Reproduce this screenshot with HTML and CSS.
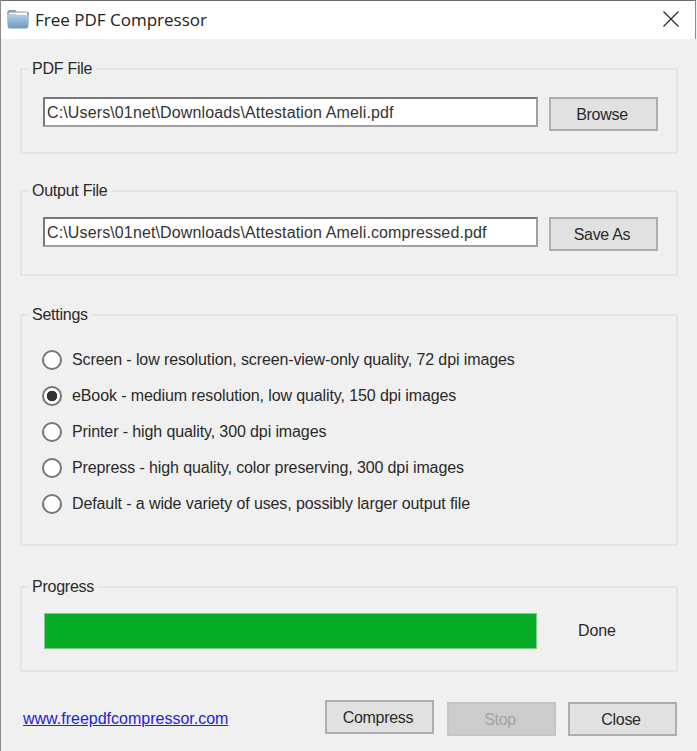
FILE: index.html
```html
<!DOCTYPE html>
<html lang="en">

<head>
    <meta charset="UTF-8">
    <title>Free PDF Compressor</title>
    <link rel="stylesheet" href="styles.css">
</head>

<body>
    <div class="window">
        <div class="titlebar">
            <svg class="app-icon" width="24" height="22" viewBox="0 0 24 22">
                <defs>
                    <linearGradient id="folder" x1="0" y1="0" x2="0" y2="1">
                        <stop offset="0" stop-color="#b4d0e6"/>
                        <stop offset="1" stop-color="#6d98bd"/>
                    </linearGradient>
                </defs>
                <path d="M1 6 Q1 2 4 2 H9 L11 3.5 H20 Q23 3.5 23 6 V10 H1 Z" fill="#8f9ca6"/>
                <rect x="3" y="4.5" width="18" height="4.5" fill="#f4f6f7"/>
                <path d="M1 7 Q1 6 2 6 H9 L11 7 H22 Q23 7 23 8 L22.4 18 Q22.3 20.5 20 20.5 H4 Q1.7 20.5 1.6 18 Z" fill="url(#folder)"/>
            </svg>
            <span class="title">Free PDF Compressor</span>
            <svg class="close-icon" width="16" height="16" viewBox="0 0 16 16">
                <path d="M0.5 0.5 L15.5 15.5 M15.5 0.5 L0.5 15.5" stroke="#222" stroke-width="1.1" fill="none"/>
            </svg>
        </div>

        <div class="content">
            <div class="group group-pdf">
                <div class="group-title">PDF File</div>
                <div class="file-row">
                    <input class="path" type="text" value="C:\Users\01net\Downloads\Attestation Ameli.pdf">
                    <button class="btn">Browse</button>
                </div>
            </div>

            <div class="group group-output">
                <div class="group-title">Output File</div>
                <div class="file-row">
                    <input class="path" type="text" value="C:\Users\01net\Downloads\Attestation Ameli.compressed.pdf">
                    <button class="btn">Save As</button>
                </div>
            </div>

            <div class="group group-settings">
                <div class="group-title">Settings</div>
                <ul class="options">
                    <li><label><input type="radio" name="q"><span>Screen - low resolution, screen-view-only quality, 72 dpi images</span></label></li>
                    <li><label><input type="radio" name="q" checked><span>eBook - medium resolution, low quality, 150 dpi images</span></label></li>
                    <li><label><input type="radio" name="q"><span>Printer - high quality, 300 dpi images</span></label></li>
                    <li><label><input type="radio" name="q"><span>Prepress - high quality, color preserving, 300 dpi images</span></label></li>
                    <li><label><input type="radio" name="q"><span>Default - a wide variety of uses, possibly larger output file</span></label></li>
                </ul>
            </div>

            <div class="group group-progress">
                <div class="group-title">Progress</div>
                <div class="progress-row">
                    <div class="progress-bar"></div>
                    <span class="status">Done</span>
                </div>
            </div>

            <div class="footer">
                <a class="site-link" href="#">www.freepdfcompressor.com</a>
                <div class="actions">
                    <button class="btn btn-compress">Compress</button>
                    <button class="btn" disabled>Stop</button>
                    <button class="btn">Close</button>
                </div>
            </div>
        </div>
    </div>
</body>

</html>
```

FILE: styles.css
```css
* {
    margin: 0;
    padding: 0;
    box-sizing: border-box;
}

li {
    list-style: none;
}

body {
    background-color: #f0f0f0;
    font-family: "Liberation Sans", Arial, sans-serif;
    font-size: 16px;
    letter-spacing: -0.11px;
    color: #2a2a2a;
}

.window {
    width: 697px;
    height: 751px;
    overflow: hidden;
    border-left: 1px solid #8a8a8a;
}

.titlebar {
    height: 39px;
    background-color: #fff;
    border-top: 1px solid #6e6e6e;
    border-right: 1px solid #8a8a8a;
    margin-right: 1px;
    display: flex;
    align-items: center;
    padding: 0 16px 2px 5px;
}

.app-icon {
    margin-right: 5px;
}

.title {
    font-family: "Open Sans", sans-serif;
    font-size: 17px;
    letter-spacing: 0;
    color: #222;
    flex: 1;
}

.content {
    padding: 29px 19px 0;
}

.group {
    border: 2px solid #e5e5e5;
    padding: 0 18px 0 21px;
}

.group-title {
    width: fit-content;
    background-color: #f0f0f0;
    margin: -11px 0 0 -14px;
    padding: 0 4px 0 3px;
    letter-spacing: -0.25px;
    line-height: 20px;
}

.group-pdf {
    height: 86px;
}

.group-output {
    height: 86px;
    margin-top: 36px;
}

.group-output .file-row {
    margin-top: 16px;
}

.group-settings {
    height: 232px;
    margin-top: 38px;
}

.group-progress {
    height: 86px;
    margin-top: 40px;
}

.file-row {
    display: flex;
    align-items: flex-start;
    gap: 11px;
    margin-top: 18px;
}

.path {
    flex: none;
    width: 495px;
    height: 30px;
    border: 2px solid #7a7a7a;
    border-right-color: #a0a0a0;
    border-bottom-color: #a0a0a0;
    background-color: #fff;
    padding: 2px 1px 0 2px;
    font-family: inherit;
    font-size: 16px;
    letter-spacing: 0.13px;
    color: #333;
}

.btn {
    flex: none;
    width: 109px;
    height: 34px;
    background-color: #e1e1e1;
    border: 2px solid #adadad;
    padding: 2px 3px 0 0;
    font-family: inherit;
    font-size: 16px;
    letter-spacing: -0.3px;
    color: #2a2a2a;
}

.btn:disabled {
    background-color: #cccccc;
    border-color: #c4c4c4;
    color: #a3a3a3;
}

.options {
    margin-top: 17px;
    margin-left: -1px;
}

.options li {
    height: 36px;
}

.options label {
    display: flex;
    align-items: center;
    height: 36px;
    gap: 10px;
}

.options input {
    appearance: none;
    width: 20px;
    height: 20px;
    border: 2px solid #767676;
    border-radius: 50%;
    background-color: #fff;
}

.options input:checked {
    background: radial-gradient(circle, #333 0 5px, #fff 5.6px);
}

.progress-row {
    display: flex;
    align-items: center;
    margin-top: 16px;
}

.progress-bar {
    width: 493px;
    height: 36px;
    margin-left: 1px;
    background-color: #06ae28;
    border: 1px solid #7fc98c;
}

.status {
    margin-left: 41px;
}

.footer {
    display: flex;
    justify-content: space-between;
    align-items: flex-start;
    margin-top: 28px;
}

.site-link {
    letter-spacing: 0;
    color: #2222dd;
    margin: 10px 0 0 3px;
}

.actions {
    display: flex;
    align-items: flex-start;
    gap: 12px;
    padding-top: 2px;
    margin-right: 1px;
}

.btn-compress {
    margin: -2px 1px 0 0;
}
```
